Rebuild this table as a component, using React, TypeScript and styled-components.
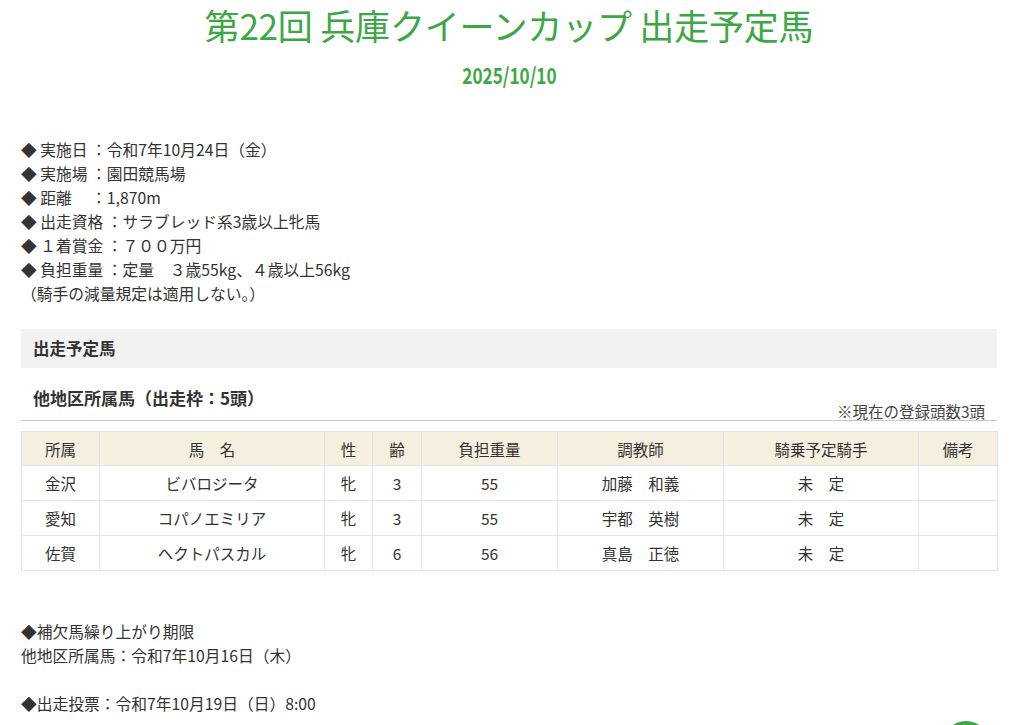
import React from "react";
import styled, { createGlobalStyle } from "styled-components";

const GlobalStyle = createGlobalStyle`
  html, body { margin: 0; padding: 0; background: #fff; }
  body {
    font-family: "Noto Sans CJK JP", "Noto Sans", sans-serif;
    color: #333;
    overflow: hidden;
  }
`;

const Page = styled.div`
  width: 976px;
  margin-left: 21px;
`;

const Title = styled.h1`
  margin: 0;
  height: 50px;
  line-height: 50px;
  font-size: 35px;
  font-weight: 400;
  color: #3ca845;
  text-align: center;
  letter-spacing: -0.2px;
`;

const DateRow = styled.div`
  margin-top: 12px;
  height: 24px;
  line-height: 24px;
  text-align: center;
`;

const DateText = styled.span`
  display: inline-block;
  font-size: 22px;
  font-weight: 700;
  color: #3ca845;
  transform: scaleX(0.78);
`;

const InfoList = styled.div`
  margin-top: 52px;
  font-size: 15.75px;
  line-height: 24px;
  color: #333;
`;

const Line = styled.div`
  white-space: pre;
  height: 24px;
`;

const SectionBar = styled.div`
  margin-top: 23px;
  height: 39px;
  line-height: 39px;
  background: #f2f2f2;
  padding-left: 12px;
  font-size: 16.5px;
  font-weight: 700;
  color: #333;
`;

const SubHead = styled.div`
  margin-top: 18px;
  border-bottom: 1px solid #c8c8c8;
  padding: 0 12px;
`;

const SubTitle = styled.div`
  font-size: 17px;
  font-weight: 700;
  line-height: 24px;
  color: #333;
`;

const Note = styled.div`
  margin-top: -7px;
  text-align: right;
  font-size: 15.5px;
  line-height: 17px;
  color: #444;
`;

const Table = styled.table`
  margin-top: 10px;
  width: 976px;
  table-layout: fixed;
  border-collapse: collapse;
  font-size: 15.5px;
  color: #333;
`;

const Th = styled.th`
  height: 33px;
  padding: 0;
  background: #f5efe0;
  font-weight: 400;
  border: 1px solid #e4e4e4;
  text-align: center;
  vertical-align: middle;
`;

const Td = styled.td`
  height: 34px;
  padding: 0;
  border: 1px solid #e4e4e4;
  text-align: center;
  vertical-align: middle;
  white-space: pre;
`;

const Footer = styled.div`
  margin-top: 49px;
  font-size: 15.75px;
  line-height: 24px;
  color: #333;
`;

const TopButton = styled.div`
  position: fixed;
  left: 941px;
  top: 721px;
  width: 50px;
  height: 50px;
  border-radius: 50%;
  background: #3ca845;
`;

const cols = [78, 225, 48, 49, 136, 166, 195, 79];
const headers = ["所属", "馬　名", "性", "齢", "負担重量", "調教師", "騎乗予定騎手", "備考"];
const rows = [
  ["金沢", "ビバロジータ", "牝", "3", "55", "加藤　和義", "未　定", ""],
  ["愛知", "コパノエミリア", "牝", "3", "55", "宇都　英樹", "未　定", ""],
  ["佐賀", "ヘクトパスカル", "牝", "6", "56", "真島　正徳", "未　定", ""],
];

const info = [
  "◆ 実施日 ：令和7年10月24日（金）",
  "◆ 実施場 ：園田競馬場",
  "◆ 距離　 ：1,870m",
  "◆ 出走資格 ：サラブレッド系3歳以上牝馬",
  "◆ １着賞金 ：７００万円",
  "◆ 負担重量 ：定量　３歳55kg、４歳以上56kg",
  "（騎手の減量規定は適用しない。）",
];

export default function App() {
  return (
    <>
      <GlobalStyle />
      <Page>
        <Title>第22回 兵庫クイーンカップ 出走予定馬</Title>
        <DateRow>
          <DateText>2025/10/10</DateText>
        </DateRow>
        <InfoList>
          {info.map((t, i) => (
            <Line key={i}>{t}</Line>
          ))}
        </InfoList>
        <SectionBar>出走予定馬</SectionBar>
        <SubHead>
          <SubTitle>他地区所属馬（出走枠：5頭）</SubTitle>
          <Note>※現在の登録頭数3頭</Note>
        </SubHead>
        <Table>
          <colgroup>
            {cols.map((w, i) => (
              <col key={i} style={{ width: w }} />
            ))}
          </colgroup>
          <thead>
            <tr>
              {headers.map((h) => (
                <Th key={h}>{h}</Th>
              ))}
            </tr>
          </thead>
          <tbody>
            {rows.map((r, i) => (
              <tr key={i}>
                {r.map((c, j) => (
                  <Td key={j}>{c}</Td>
                ))}
              </tr>
            ))}
          </tbody>
        </Table>
        <Footer>
          <Line>◆補欠馬繰り上がり期限</Line>
          <Line>他地区所属馬：令和7年10月16日（木）</Line>
          <Line> </Line>
          <Line>◆出走投票：令和7年10月19日（日）8:00</Line>
        </Footer>
      </Page>
      <TopButton />
    </>
  );
}
